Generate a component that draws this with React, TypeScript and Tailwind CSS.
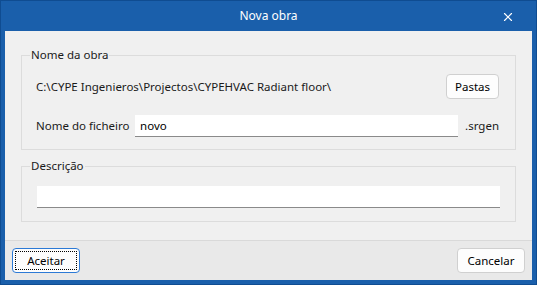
import { X } from "lucide-react"

const font = { fontFamily: '"Noto Sans", "Open Sans", sans-serif' }

function Button({ label, focused }: { label: string; focused?: boolean }) {
  return (
    <button
      className={
        "relative h-[25px] w-[68px] rounded-[4px] bg-[#fdfdfd] text-[11.5px] text-black " +
        (focused ? "border border-[#2c7ad6]" : "border border-[#d0d0d0]")
      }
    >
      {focused && <span className="absolute inset-[2px] border border-dotted border-black" />}
      <span className="relative">{label}</span>
    </button>
  )
}

export default function App() {
  return (
    <div
      className="flex h-[285px] w-[537px] flex-col border border-[#0f4c91] bg-[#1a5fab] text-[11.5px] text-[#1a1a1a]"
      style={font}
    >
      <div className="relative flex h-[30px] shrink-0 items-center justify-center text-[12px] text-white">
        Nova obra
        <X className="absolute right-[21px] top-[9px] h-[14px] w-[14px] text-white" strokeWidth={2} />
      </div>

      <div className="mx-[4px] mb-[4px] flex flex-1 flex-col bg-[#f0f0f0]">
        <div className="flex flex-1 flex-col px-[16px] pt-[16px]">
          <fieldset className="min-w-0 border border-[#dcdcdc] pb-[12px] pl-[14px] pr-[16px]">
            <legend className="ml-[-6px] px-[1px] leading-[16px]">Nome da obra</legend>
            <div className="mt-[11px] flex h-[25px] items-center justify-between">
              <span>C:\CYPE Ingenieros\Projectos\CYPEHVAC Radiant floor\</span>
              <button className="h-[25px] w-[53px] rounded-[4px] border border-[#d0d0d0] bg-[#fdfdfd] text-[11.5px] text-black">
                Pastas
              </button>
            </div>
            <div className="mt-[16px] flex h-[22px] items-center">
              <span className="w-[100px]">Nome do ficheiro</span>
              <div className="flex h-[22px] w-[326px] items-center border-b border-[#8a8a8a] bg-white px-[5px] text-black">
                novo
              </div>
              <span className="ml-[7px]">.srgen</span>
            </div>
          </fieldset>

          <fieldset className="mt-[8px] min-w-0 border border-[#dcdcdc] pb-[13px] pl-[15px] pr-[15px]">
            <legend className="ml-[-7px] px-[1px] leading-[16px]">Descrição</legend>
            <div className="mt-[12px] h-[22px] border-b border-[#8a8a8a] bg-white" />
          </fieldset>
        </div>

        <div className="flex h-[40px] items-start justify-between border-t border-[#d9d9d9] bg-[#e9e9e9] px-[7px] pt-[7px]">
          <Button label="Aceitar" focused />
          <Button label="Cancelar" />
        </div>
      </div>
    </div>
  )
}
